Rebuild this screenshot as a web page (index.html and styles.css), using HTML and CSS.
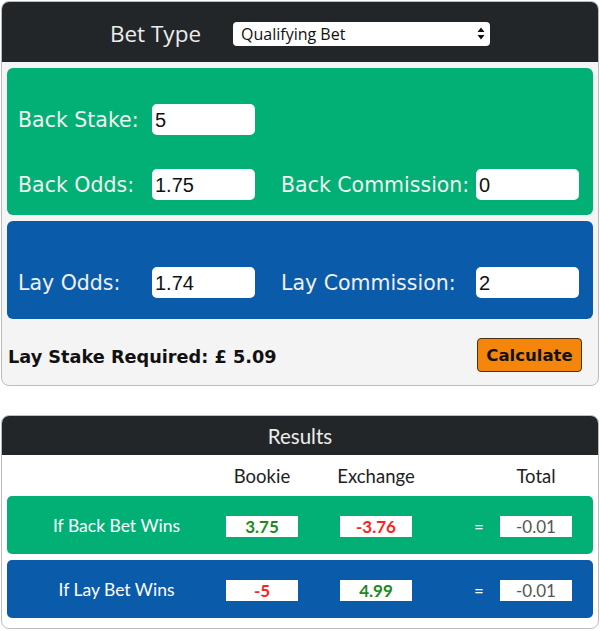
FILE: index.html
```html
<!DOCTYPE html>
<html lang="en">
<head>
  <meta charset="UTF-8" />
  <meta name="viewport" content="width=device-width, initial-scale=1.0" />
  <title>Matched Betting Calculator</title>
  <link rel="stylesheet" href="styles.css">
</head>
<body>

  <div class="card calc">
    <div class="card-head bet-type">
      <label for="betType">Bet Type</label>
      <div class="select" id="betType">
        <span>Qualifying Bet</span>
        <svg width="8" height="13" viewBox="0 0 8 13"><path d="M4 0.5 L7.5 5 L0.5 5 Z M4 12.5 L7.5 8 L0.5 8 Z" fill="#111"/></svg>
      </div>
    </div>

    <div class="panel back">
      <div class="field-grid">
        <label for="backStake">Back Stake:</label>
        <input type="text" id="backStake" value="5" />
        <span></span>
        <span></span>

        <label for="backOdds">Back Odds:</label>
        <input type="text" id="backOdds" value="1.75" />
        <label class="second" for="backComm">Back Commission:</label>
        <input type="text" id="backComm" value="0" />
      </div>
    </div>

    <div class="panel lay">
      <div class="field-grid">
        <label for="layOdds">Lay Odds:</label>
        <input type="text" id="layOdds" value="1.74" />
        <label class="second" for="layComm">Lay Commission:</label>
        <input type="text" id="layComm" value="2" />
      </div>
    </div>

    <div class="calc-foot">
      <div class="lay-stake">Lay Stake Required: £ <span id="layStake">5.09</span></div>
      <button class="calc-button">Calculate</button>
    </div>
  </div>

  <div class="card results">
    <div class="card-head results-head">Results</div>

    <div class="result-grid col-heads">
      <span></span>
      <span class="col">Bookie</span>
      <span></span>
      <span class="col">Exchange</span>
      <span></span>
      <span></span>
      <span class="col">Total</span>
    </div>

    <div class="result-grid result-row back">
      <span class="row-label">If Back Bet Wins</span>
      <span class="val pos">3.75</span>
      <span></span>
      <span class="val neg">-3.76</span>
      <span></span>
      <span class="eq">=</span>
      <span class="val total">-0.01</span>
    </div>

    <div class="result-grid result-row lay">
      <span class="row-label">If Lay Bet Wins</span>
      <span class="val neg">-5</span>
      <span></span>
      <span class="val pos">4.99</span>
      <span></span>
      <span class="eq">=</span>
      <span class="val total">-0.01</span>
    </div>
  </div>

</body>
</html>
```

FILE: styles.css
```css
body {
  margin: 0;
  padding: 0;
  background: white;
  font-family: 'DejaVu Sans', sans-serif;
}
.card {
  margin: 1px 1px 0;
  border: 1px solid #bcbcbc;
  border-radius: 8px;
  overflow: hidden;
}
.card-head {
  background-color: #232628;
  color: #ececec;
}
.calc {
  background-color: #f4f4f4;
}
.bet-type {
  height: 60px;
  display: flex;
  align-items: center;
  justify-content: center;
  gap: 32px;
  padding-top: 3px;
  box-sizing: border-box;
  font-family: 'Open Sans', sans-serif;
}
.bet-type label {
  font-size: 22.5px;
}
.select {
  width: 257px;
  height: 24px;
  box-sizing: border-box;
  background: white;
  border-radius: 4px;
  display: flex;
  align-items: center;
  justify-content: space-between;
  padding: 0 5px 0 8px;
  font-size: 16px;
  color: #111;
}
.panel {
  margin: 6px 5px 0;
  border-radius: 6px;
}
.panel.back {
  background-color: #02b075;
  padding: 36px 14px 15px 11px;
}
.panel.lay {
  background-color: #0b5bab;
  padding: 46px 14px 21px 11px;
}
.field-grid {
  display: grid;
  grid-template-columns: 134px 103px 1fr 103px;
  row-gap: 34px;
  align-items: center;
}
.field-grid label {
  font-size: 20.5px;
  color: #f0f0f0;
}
.field-grid label.second {
  padding-left: 26px;
}
.field-grid input {
  width: 103px;
  height: 31px;
  box-sizing: border-box;
  border: none;
  border-radius: 5px;
  padding: 2px 3px 0;
  font-family: 'Liberation Sans', sans-serif;
  font-size: 20px;
  color: #111;
}
.calc-foot {
  display: flex;
  align-items: center;
  justify-content: space-between;
  padding: 19px 16px 13px 6px;
}
.lay-stake {
  font-weight: bold;
  font-size: 17.7px;
  color: #111;
  margin-top: 4px;
}
.calc-button {
  width: 105px;
  height: 34px;
  background-color: #f5860c;
  border: 1px solid #4a3012;
  border-radius: 4px;
  font-family: 'DejaVu Sans', sans-serif;
  font-weight: bold;
  font-size: 16.5px;
  color: #111;
  padding: 0;
  cursor: pointer;
}
.results {
  margin-top: 29px;
  background: white;
  padding-bottom: 10px;
  font-family: 'Lato', sans-serif;
}
.results-head {
  height: 39px;
  display: flex;
  align-items: center;
  justify-content: center;
  font-size: 20.5px;
}
.result-grid {
  display: grid;
  grid-template-columns: 219px 72px 42px 72px 46px 42px 72px;
  align-items: center;
  margin: 0 5px;
}
.col-heads {
  height: 41px;
  font-size: 18.5px;
  color: #222;
}
.col-heads .col {
  justify-self: center;
  white-space: nowrap;
}
.result-row {
  height: 58px;
  border-radius: 5px;
  color: white;
}
.result-row.back {
  background-color: #02b075;
}
.result-row.lay {
  background-color: #0b5bab;
  margin-top: 6px;
}
.row-label {
  text-align: center;
  font-size: 17.5px;
  padding-top: 1px;
}
.val {
  background: white;
  height: 21px;
  line-height: 22px;
  text-align: center;
  font-weight: bold;
  font-size: 17px;
  margin-top: 2px;
}
.val.pos {
  color: #1e8a1e;
}
.val.neg {
  color: #ff1f1f;
}
.val.total {
  color: #555;
  font-weight: normal;
}
.eq {
  text-align: center;
  font-weight: bold;
  font-size: 16px;
}
```
